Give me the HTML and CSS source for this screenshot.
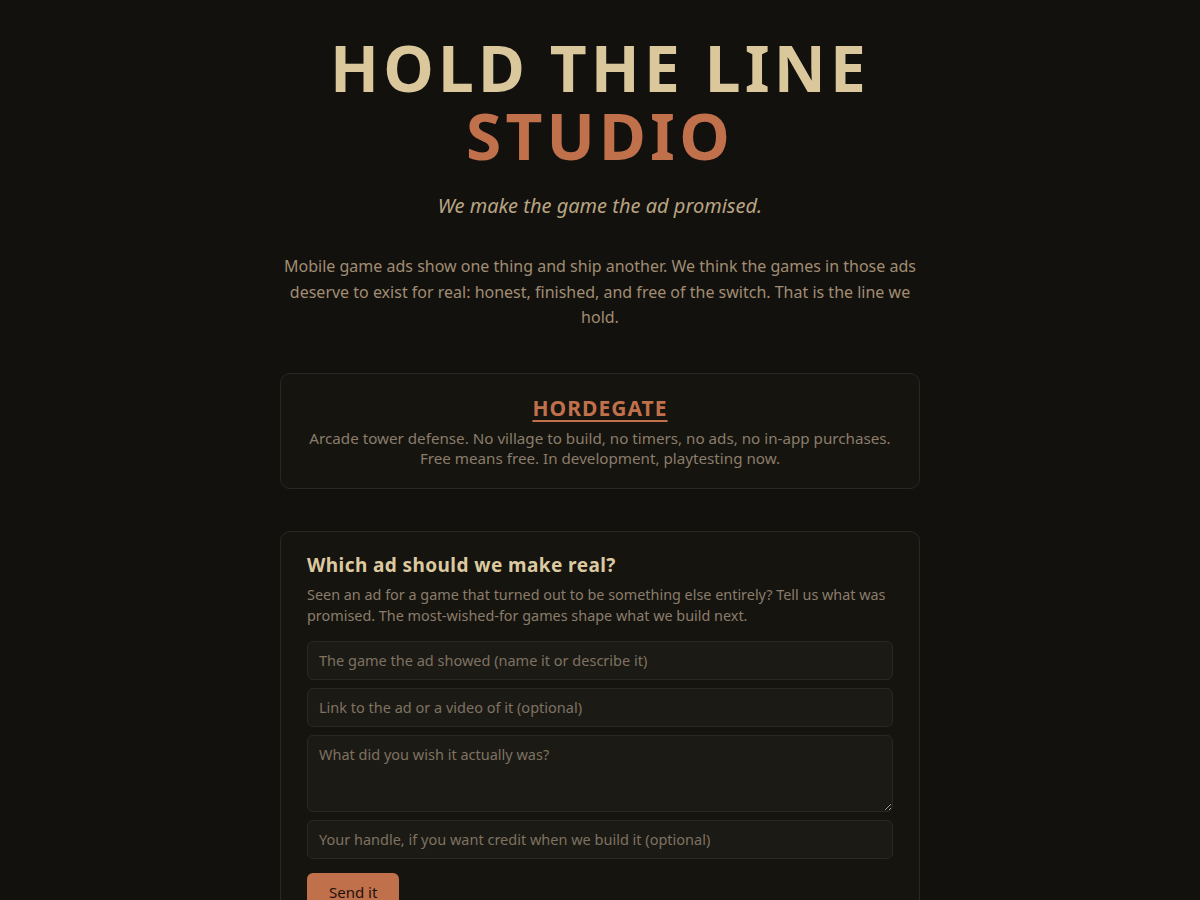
FILE: index.html
```html
<!DOCTYPE html>
<html lang="en">
<head>
<meta charset="utf-8">
<title>Hold the Line Studio</title>
<link rel="stylesheet" href="styles.css">
</head>
<body>
<main class="page">
  <header class="hero">
    <h1 class="title"><span class="title-top">HOLD THE LINE</span><span class="title-bottom">STUDIO</span></h1>
    <p class="tagline">We make the game the ad promised.</p>
    <p class="intro">Mobile game ads show one thing and ship another. We think the games in those ads deserve to exist for real: honest, finished, and free of the switch. That is the line we hold.</p>
  </header>
  <section class="card game">
    <h2 class="game-name"><a href="#">HORDEGATE</a></h2>
    <p class="game-desc">Arcade tower defense. No village to build, no timers, no ads, no in-app purchases. Free means free. In development, playtesting now.</p>
  </section>
  <section class="card form-card">
    <h2 class="form-title">Which ad should we make real?</h2>
    <p class="form-desc">Seen an ad for a game that turned out to be something else entirely? Tell us what was promised. The most-wished-for games shape what we build next.</p>
    <form class="form">
      <input class="field" type="text" placeholder="The game the ad showed (name it or describe it)">
      <input class="field" type="text" placeholder="Link to the ad or a video of it (optional)">
      <textarea class="field area" placeholder="What did you wish it actually was?"></textarea>
      <input class="field" type="text" placeholder="Your handle, if you want credit when we build it (optional)">
      <div class="actions"><button class="send" type="button">Send it</button></div>
    </form>
  </section>
</main>
</body>
</html>
```
FILE: styles.css
```css
html, body {
  margin: 0;
  padding: 0;
  background: #13110e;
}
body {
  font-family: "Noto Sans", "Open Sans", sans-serif;
  color: #a08d72;
}
.page {
  width: 640px;
  margin: 0 auto;
  padding: 34px 0 60px;
}
.hero {
  text-align: center;
}
.title {
  margin: 0;
  font-size: 64px;
  line-height: 68px;
  font-weight: 700;
  letter-spacing: 0.065em;
  display: flex;
  flex-direction: column;
  align-items: center;
}
.title-top { color: #dac79b; }
.title-bottom { color: #c0704a; }
.tagline {
  margin: 21px 0 0;
  font-style: italic;
  font-size: 20px;
  line-height: 30px;
  color: #b9a582;
}
.intro {
  margin: 33px 0 0;
  font-size: 16px;
  line-height: 25.5px;
  color: #a08d72;
}
.card {
  border: 1px solid #2b2722;
  border-radius: 10px;
  background: #16140f;
}
.game {
  margin-top: 42px;
  padding: 20px 26px 20px;
  text-align: center;
}
.game-name {
  margin: 0;
  font-size: 21px;
  line-height: 28px;
  letter-spacing: 0.05em;
}
.game-name a {
  color: #c0704a;
  text-decoration: underline;
  text-underline-offset: 4px;
  text-decoration-thickness: 2px;
}
.game-desc {
  margin: 6px 0 0;
  font-size: 15.2px;
  line-height: 20px;
  color: #8a7d6b;
}
.form-card {
  margin-top: 42px;
  padding: 20px 26px 26px;
}
.form-title {
  margin: 0;
  font-size: 19px;
  line-height: 26px;
  color: #dcc9a0;
  letter-spacing: 0.022em;
}
.form-desc {
  margin: 6px 0 0;
  font-size: 14.4px;
  line-height: 21.5px;
  color: #8a7d6b;
}
.form {
  margin-top: 14px;
  display: flex;
  flex-direction: column;
  gap: 8px;
}
.field {
  box-sizing: border-box;
  width: 100%;
  height: 39px;
  padding: 8px 11px;
  background: #1c1a15;
  border: 1px solid #2b2823;
  border-radius: 6px;
  color: #cbb991;
  font-family: "Noto Sans", "Open Sans", sans-serif;
  font-size: 14.5px;
  line-height: 20px;
}
.field::placeholder {
  color: #7e7262;
}
.area {
  height: 77px;
  resize: vertical;
}
.actions {
  margin-top: 6px;
}
.send {
  background: #c0704a;
  border: none;
  border-radius: 6px;
  color: #1c120c;
  font-family: "Noto Sans", "Open Sans", sans-serif;
  font-size: 15px;
  padding: 9px 22px;
  cursor: pointer;
}
```
